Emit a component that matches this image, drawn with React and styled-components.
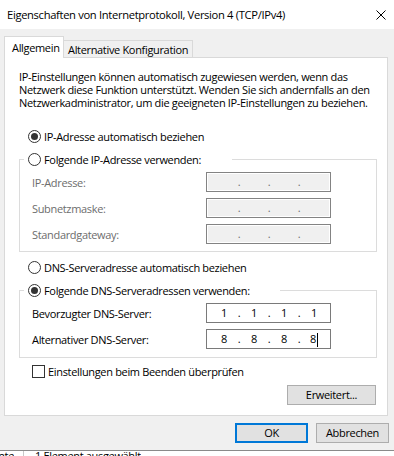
import styled, { createGlobalStyle } from 'styled-components';

const GlobalStyle = createGlobalStyle`
  html, body {
    margin: 0;
    padding: 0;
  }
  body {
    width: 394px;
    height: 456px;
    overflow: hidden;
    background: #f0f0f0;
    font-family: "Open Sans", "Noto Sans", sans-serif;
    font-size: 11px;
    letter-spacing: -0.33px;
    color: #000;
  }
`;

const Window = styled.div`
  width: 394px;
  height: 456px;
  display: flex;
  flex-direction: column;
  background: #f0f0f0;
  overflow: hidden;
`;

const TitleBar = styled.div`
  flex: none;
  height: 29px;
  background: #fff;
  display: flex;
  align-items: center;
  justify-content: space-between;
  padding: 0 8px 0 7px;
  font-size: 11.2px;
`;

const Body = styled.div`
  display: flex;
  flex-direction: column;
  padding: 7px 6px 0 4px;
`;

const TabStrip = styled.div`
  display: flex;
  align-items: flex-end;
  height: 21px;
`;

const Tab = styled.div`
  position: relative;
  z-index: ${(p) => (p.$active ? 1 : 0)};
  box-sizing: border-box;
  width: ${(p) => p.$width}px;
  height: ${(p) => (p.$active ? 22 : 17)}px;
  margin-bottom: ${(p) => (p.$active ? -1 : 0)}px;
  padding-left: ${(p) => (p.$active ? 7 : 4)}px;
  background: ${(p) => (p.$active ? '#fff' : '#f0f0f0')};
  border: 1px solid #d9d9d9;
  border-bottom: none;
  border-left: ${(p) => (p.$active ? '1px solid #d9d9d9' : 'none')};
  display: flex;
  align-items: center;
  white-space: nowrap;
`;

const Panel = styled.div`
  box-sizing: border-box;
  height: 359px;
  background: #fff;
  border: 1px solid #d9d9d9;
  padding-top: 12px;
  display: flex;
  flex-direction: column;
`;

const Intro = styled.p`
  margin: 0 0 0 14px;
  line-height: 13px;
  white-space: nowrap;
`;

const OptionRow = styled.label`
  display: flex;
  align-items: center;
  gap: 3px;
  height: 13px;
  line-height: 13px;
  margin: ${(p) => p.$top || 0}px 0 0 ${(p) => p.$left || 23}px;
  white-space: nowrap;
`;

const RadioMark = styled.span`
  box-sizing: border-box;
  flex: none;
  width: 13px;
  height: 13px;
  border-radius: 50%;
  border: 1px solid #333;
  background: #fff;
  display: grid;
  place-items: center;

  &::after {
    content: '';
    display: ${(p) => (p.$checked ? 'block' : 'none')};
    width: 7px;
    height: 7px;
    border-radius: 50%;
    background: #333;
  }
`;

const CheckMark = styled.span`
  box-sizing: border-box;
  flex: none;
  width: 13px;
  height: 13px;
  border: 1px solid #333;
  background: #fff;
`;

const Group = styled.fieldset`
  margin: 10px 10px 0 14px;
  padding: 6px 45px ${(p) => p.$bottom}px 4px;
  border: 1px solid #dcdcdc;
  display: flex;
  flex-direction: column;
  gap: 6px;
  min-width: 0;
`;

const Legend = styled.legend`
  box-sizing: border-box;
  width: ${(p) => p.$width}px;
  padding: 0 0 0 4px;
  height: 13px;
  line-height: 13px;
  display: flex;
  align-items: center;
  gap: 3px;
  white-space: nowrap;
`;

const FieldRow = styled.div`
  display: grid;
  grid-template-columns: 1fr 125px;
  align-items: center;
  padding-left: 8px;
  height: 20px;
  color: ${(p) => (p.$disabled ? '#6d6d6d' : '#000')};
  white-space: nowrap;
`;

const IpBox = styled.div`
  box-sizing: border-box;
  height: 20px;
  border: 1px solid ${(p) => (p.$disabled ? '#838383' : '#7a7a7a')};
  box-shadow: ${(p) => (p.$disabled ? 'inset 0 0 0 1px #fff' : 'none')};
  background: ${(p) => (p.$disabled ? '#f0f0f0' : '#fff')};
  padding-left: 6px;
  display: flex;
  align-items: center;
  color: ${(p) => (p.$disabled ? '#6d6d6d' : '#000')};
`;

const Octet = styled.span`
  width: 22px;
  text-align: center;
  line-height: 16px;
`;

const Dot = styled.span`
  width: 8px;
  text-align: center;
  line-height: 16px;
`;

const Caret = styled.span`
  display: inline-block;
  width: 1px;
  height: 14px;
  background: #000;
  vertical-align: middle;
  margin-left: 1px;
`;

const PanelFooter = styled.div`
  display: flex;
  justify-content: flex-end;
  margin: 7px 11px 0 0;
`;

const Button = styled.button`
  box-sizing: border-box;
  width: ${(p) => p.$width}px;
  height: 20px;
  padding: 0;
  background: #e1e1e1;
  border: ${(p) => (p.$default ? '2px solid #0078d7' : '1px solid #adadad')};
  font: inherit;
  letter-spacing: inherit;
  color: #000;
  line-height: 16px;
`;

const Footer = styled.div`
  display: flex;
  justify-content: flex-end;
  gap: 8px;
  margin: 7px -1px 0 0;
`;

const StatusStrip = styled.div`
  margin-top: auto;
  flex: none;
  height: 5px;
  border-top: 1px solid #8a8a8a;
  background: #fff;
  overflow: hidden;
  display: flex;
  align-items: flex-start;
`;

const StatusText = styled.span`
  flex: none;
  width: ${(p) => p.$width || 'auto'};
  margin-top: -3px;
  line-height: 15px;
  white-space: nowrap;
  overflow: hidden;
  direction: ${(p) => (p.$clipStart ? 'rtl' : 'ltr')};
`;

const StatusDivider = styled.span`
  flex: none;
  width: 1px;
  height: 5px;
  background: #c8c8c8;
  margin: 0 11px 0 9px;
`;

const CloseIcon = () => (
  <svg width="10" height="10" viewBox="0 0 10 10" fill="none" stroke="#000" strokeWidth="1">
    <path d="M0.5 0.5L9.5 9.5M9.5 0.5L0.5 9.5" />
  </svg>
);

const IpField = ({ values, disabled, caret }) => (
  <IpBox $disabled={disabled}>
    {[0, 1, 2, 3].map((i) => (
      <span key={i} style={{ display: 'contents' }}>
        <Octet>
          {values ? values[i] : ''}
          {caret && i === 3 && <Caret />}
        </Octet>
        {i < 3 && <Dot>.</Dot>}
      </span>
    ))}
  </IpBox>
);

export default function App() {
  return (
    <>
      <GlobalStyle />
      <Window>
        <TitleBar>
          <span>Eigenschaften von Internetprotokoll, Version 4 (TCP/IPv4)</span>
          <CloseIcon />
        </TitleBar>
        <Body>
          <TabStrip>
            <Tab $active $width={60}>Allgemein</Tab>
            <Tab $width={129}>Alternative Konfiguration</Tab>
          </TabStrip>
          <Panel>
            <Intro>
              IP-Einstellungen können automatisch zugewiesen werden, wenn das
              <br />
              Netzwerk diese Funktion unterstützt. Wenden Sie sich andernfalls an den
              <br />
              Netzwerkadministrator, um die geeigneten IP-Einstellungen zu beziehen.
            </Intro>
            <OptionRow $top={21}>
              <RadioMark $checked />
              IP-Adresse automatisch beziehen
            </OptionRow>
            <Group $bottom={7}>
              <Legend $width={208}>
                <RadioMark />
                Folgende IP-Adresse verwenden:
              </Legend>
              <FieldRow $disabled>
                IP-Adresse:
                <IpField disabled />
              </FieldRow>
              <FieldRow $disabled>
                Subnetzmaske:
                <IpField disabled />
              </FieldRow>
              <FieldRow $disabled>
                Standardgateway:
                <IpField disabled />
              </FieldRow>
            </Group>
            <OptionRow $top={9}>
              <RadioMark />
              DNS-Serveradresse automatisch beziehen
            </OptionRow>
            <Group $bottom={8}>
              <Legend $width={256}>
                <RadioMark $checked />
                Folgende DNS-Serveradressen verwenden:
              </Legend>
              <FieldRow>
                Bevorzugter DNS-Server:
                <IpField values={['1', '1', '1', '1']} />
              </FieldRow>
              <FieldRow>
                Alternativer DNS-Server:
                <IpField values={['8', '8', '8', '8']} caret />
              </FieldRow>
            </Group>
            <OptionRow $top={7} $left={27}>
              <CheckMark />
              Einstellungen beim Beenden überprüfen
            </OptionRow>
            <PanelFooter>
              <Button $width={89}>Erweitert...</Button>
            </PanelFooter>
          </Panel>
          <Footer>
            <Button $default $width={73}>OK</Button>
            <Button $width={73}>Abbrechen</Button>
          </Footer>
        </Body>
        <StatusStrip>
          <StatusText $width="14px" $clipStart>Elemente</StatusText>
          <StatusDivider />
          <StatusText>1 Element ausgewählt</StatusText>
        </StatusStrip>
      </Window>
    </>
  );
}
